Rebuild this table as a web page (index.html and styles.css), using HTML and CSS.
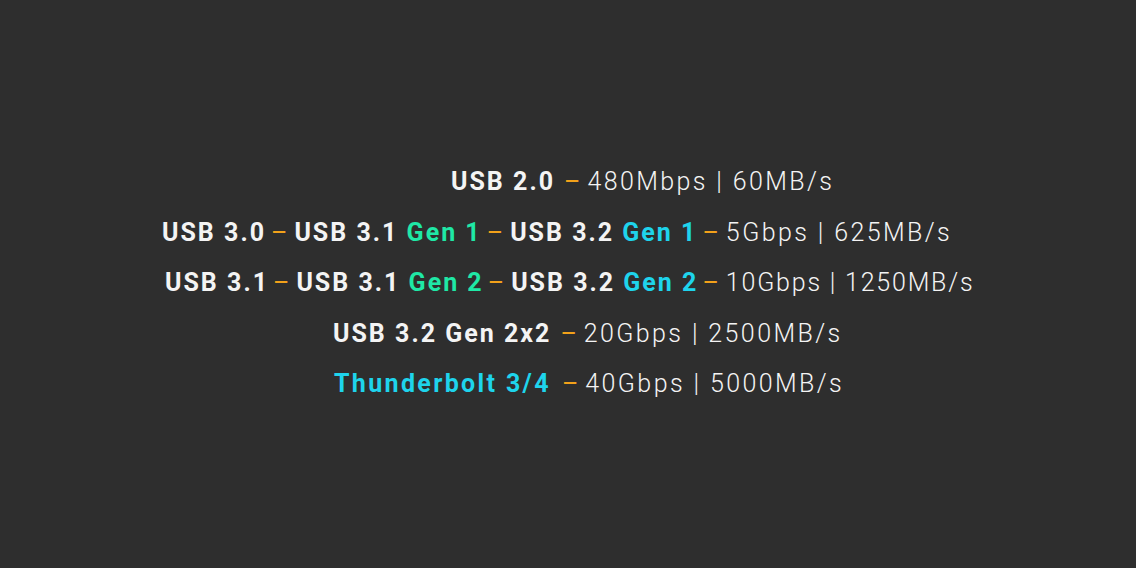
FILE: index.html
```html
<!DOCTYPE html>
<html>
<head>
<meta charset="utf-8">
<link rel="stylesheet" href="styles.css">
</head>
<body>
<main class="list">
  <div class="row r1"><span class="b">USB 2.0</span><span class="d">–</span><span class="s">480Mbps | 60MB/s</span></div>
  <div class="row r2"><span class="b">USB 3.0</span><span class="d n">–</span><span class="b">USB 3.1 <span class="g">Gen 1</span></span><span class="d n">–</span><span class="b">USB 3.2 <span class="c">Gen 1</span></span><span class="d n">–</span><span class="s">5Gbps | 625MB/s</span></div>
  <div class="row r3"><span class="b">USB 3.1</span><span class="d n">–</span><span class="b">USB 3.1 <span class="g">Gen 2</span></span><span class="d n">–</span><span class="b">USB 3.2 <span class="c">Gen 2</span></span><span class="d n">–</span><span class="s">10Gbps | 1250MB/s</span></div>
  <div class="row r4"><span class="b">USB 3.2 Gen 2x2</span><span class="d">–</span><span class="s">20Gbps | 2500MB/s</span></div>
  <div class="row r5"><span class="b c">Thunderbolt 3/4</span><span class="d">–</span><span class="s">40Gbps | 5000MB/s</span></div>
</main>
</body>
</html>
```
FILE: styles.css
```css
html, body {
  margin: 0;
  padding: 0;
  background: #2e2e2e;
  width: 1136px;
  height: 568px;
  overflow: hidden;
}
.list {
  display: flex;
  flex-direction: column;
  padding-top: 165px;
  font-family: Roboto, "Liberation Sans", sans-serif;
  font-size: 25px;
  color: #f4f4f4;
}
.row {
  display: flex;
  align-items: baseline;
  height: 50.5px;
  line-height: 34px;
  white-space: pre;
}
.r1 { padding-left: 451px; }
.r2 { padding-left: 162px; }
.r3 { padding-left: 165px; }
.r4 { padding-left: 333px; }
.r5 { padding-left: 334px; }
.b {
  font-weight: 700;
  letter-spacing: 2px;
}
.r5 .b { letter-spacing: 2.35px; }
.s {
  font-weight: 300;
  letter-spacing: 2.4px;
}
.r3 .s { letter-spacing: 1.8px; }
.d {
  color: #f2a11a;
  font-weight: 400;
  margin: 0 7px 0 9px;
}
.d.n { margin: 0 7px 0 5px; }
.r3 .d.n { margin-left: 4px; }
.r5 .d { margin-left: 11px; }
.g { color: #1fe8a6; }
.c { color: #1ed4ec; }
```
